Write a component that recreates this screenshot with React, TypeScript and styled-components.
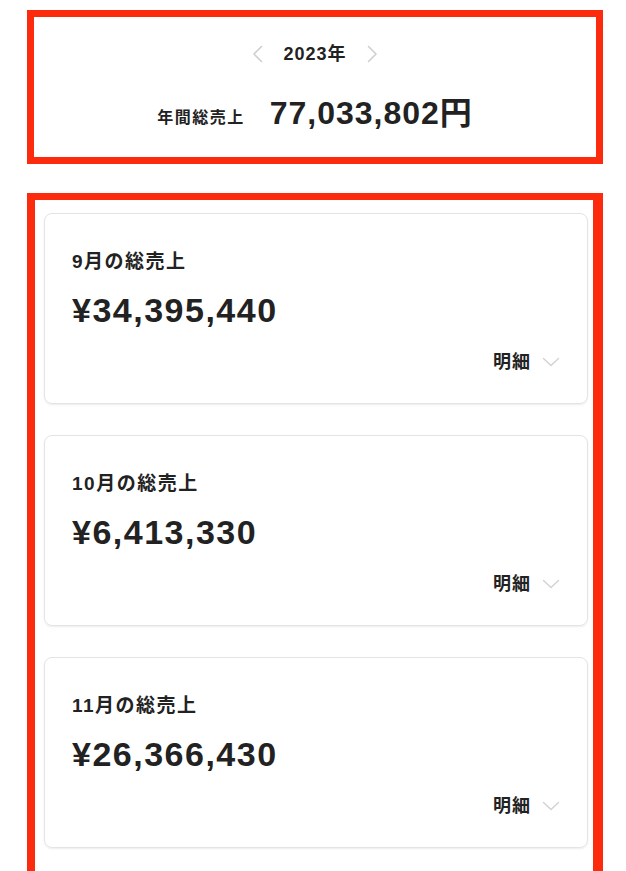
import React from 'react';
import styled, { createGlobalStyle } from 'styled-components';

const GlobalStyle = createGlobalStyle`
  html, body {
    margin: 0;
    padding: 0;
    background: #ffffff;
  }
  body {
    font-family: "Liberation Sans", "Noto Sans CJK JP", sans-serif;
    color: #222222;
  }
`;

const RED = '#fc2b0d';

const Page = styled.div`
  padding: 10px 0 0 27px;
  width: 576px;
  display: flex;
  flex-direction: column;
  gap: 29px;
`;

const SummaryBox = styled.section`
  border: 7px solid ${RED};
  padding: 23px 0 24px;
  display: flex;
  flex-direction: column;
  align-items: center;
  gap: 25px;
`;

const YearRow = styled.div`
  display: flex;
  align-items: center;
  gap: 20px;
  height: 28px;
`;

const YearText = styled.span`
  font-size: 18px;
  font-weight: 700;
  letter-spacing: 1px;
  line-height: 28px;
`;

const NavButton = styled.button`
  border: none;
  background: none;
  padding: 0;
  display: flex;
  align-items: center;
  cursor: pointer;
`;

const TotalRow = styled.div`
  display: flex;
  align-items: center;
  gap: 25px;
  height: 40px;
`;

const TotalLabel = styled.span`
  font-size: 16px;
  font-weight: 700;
  letter-spacing: 1.5px;
  margin-top: 6px;
`;

const TotalValue = styled.span`
  font-size: 32px;
  font-weight: 700;
  letter-spacing: 1px;
  line-height: 40px;
`;

const MonthBox = styled.section`
  border: 7px solid ${RED};
  border-left-width: 8px;
  border-right-width: 10px;
  border-bottom: none;
  padding: 13px 5px 31px 9px;
  display: flex;
  flex-direction: column;
  gap: 31px;
`;

const Card = styled.article`
  border: 1px solid #e4e4e4;
  border-radius: 8px;
  box-shadow: 0 1px 2px rgba(0, 0, 0, 0.08);
  padding: 34px 27px 27px;
  display: flex;
  flex-direction: column;
`;

const CardTitle = styled.h2`
  margin: 0;
  font-size: 19px;
  font-weight: 700;
  letter-spacing: 1.5px;
  line-height: 28px;
`;

const CardAmount = styled.div`
  margin-top: 12px;
  font-size: 34px;
  font-weight: 700;
  letter-spacing: 1.5px;
  line-height: 44px;
`;

const DetailToggle = styled.button`
  margin-top: 16px;
  align-self: flex-end;
  border: none;
  background: none;
  padding: 0;
  display: flex;
  align-items: center;
  gap: 11px;
  font-family: inherit;
  font-size: 18px;
  font-weight: 700;
  letter-spacing: 1px;
  line-height: 28px;
  color: #222222;
  cursor: pointer;
`;

const ChevronSide = ({ dir }: { dir: 'left' | 'right' }) => (
  <svg width="11" height="18" viewBox="0 0 11 18" fill="none">
    <path
      d={dir === 'left' ? 'M9.5 1.5L2 9l7.5 7.5' : 'M1.5 1.5L9 9l-7.5 7.5'}
      stroke="#cfcfcf"
      strokeWidth="1.6"
      strokeLinecap="round"
      strokeLinejoin="round"
    />
  </svg>
);

const ChevronDown = () => (
  <svg width="18" height="10" viewBox="0 0 18 10" fill="none">
    <path d="M1.5 1.5L9 8.5l7.5-7" stroke="#d2d2d2" strokeWidth="1.4" strokeLinecap="round" strokeLinejoin="round" />
  </svg>
);

const months = [
  { month: 9, amount: 34395440 },
  { month: 10, amount: 6413330 },
  { month: 11, amount: 26366430 },
];

const App: React.FC = () => (
  <>
    <GlobalStyle />
    <Page>
      <SummaryBox>
        <YearRow>
          <NavButton aria-label="前年">
            <ChevronSide dir="left" />
          </NavButton>
          <YearText>2023年</YearText>
          <NavButton aria-label="翌年">
            <ChevronSide dir="right" />
          </NavButton>
        </YearRow>
        <TotalRow>
          <TotalLabel>年間総売上</TotalLabel>
          <TotalValue>77,033,802円</TotalValue>
        </TotalRow>
      </SummaryBox>
      <MonthBox>
        {months.map((m) => (
          <Card key={m.month}>
            <CardTitle>{m.month}月の総売上</CardTitle>
            <CardAmount>¥{m.amount.toLocaleString('ja-JP')}</CardAmount>
            <DetailToggle>
              明細
              <ChevronDown />
            </DetailToggle>
          </Card>
        ))}
      </MonthBox>
    </Page>
  </>
);

export default App;
